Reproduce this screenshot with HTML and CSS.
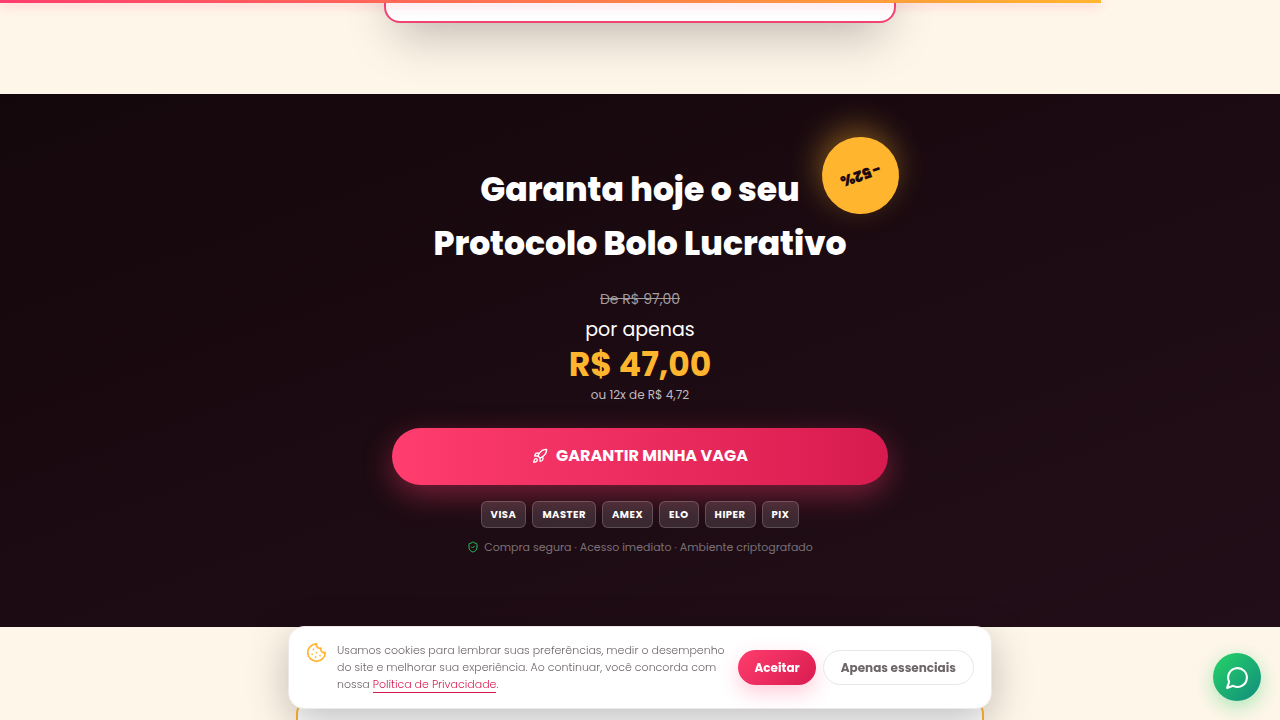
FILE: index.html
```
<!DOCTYPE html>
<html lang="pt-BR">
<head>
    <meta charset="UTF-8">
    <meta name="viewport" content="width=device-width, initial-scale=1.0">
    <title>Protocolo Bolo Lucrativo</title>
    <link rel="stylesheet" href="styles.css">
</head>
<body>
    <div class="progress"><div class="progress-bar" style="width: 86%"></div></div>

    <section class="prev-section">
        <div class="prev-card"></div>
    </section>

    <section class="offer">
        <div class="offer-inner">
            <div class="discount">-52%</div>
            <h2>Garanta hoje o seu<br>Protocolo Bolo Lucrativo</h2>
            <div class="old-price">De R$ 97,00</div>
            <div class="only">por apenas</div>
            <div class="price">R$ 47,00</div>
            <div class="installments">ou 12x de R$ 4,72</div>
            <button class="cta" type="button">
                <svg class="icon" width="16" height="16" viewBox="0 0 24 24">
                    <path d="M4.5 16.5c-1.5 1.26-2 5-2 5s3.74-.5 5-2c.71-.84.7-2.13-.09-2.91a2.18 2.18 0 0 0-2.91-.09z"/>
                    <path d="m12 15-3-3a22 22 0 0 1 2-3.95A12.88 12.88 0 0 1 22 2c0 2.72-.78 7.5-6 11a22.35 22.35 0 0 1-4 2z"/>
                    <path d="M9 12H4s.55-3.03 2-4c1.62-1.08 5 0 5 0"/>
                    <path d="M12 15v5s3.03-.55 4-2c1.08-1.62 0-5 0-5"/>
                </svg>
                GARANTIR MINHA VAGA
            </button>
            <div class="brands">
                <span>VISA</span>
                <span>MASTER</span>
                <span>AMEX</span>
                <span>ELO</span>
                <span>HIPER</span>
                <span>PIX</span>
            </div>
            <div class="secure">
                <svg class="icon" width="12" height="12" viewBox="0 0 24 24">
                    <path d="M20 13c0 5-3.5 7.5-7.66 8.95a1 1 0 0 1-.67-.01C7.5 20.5 4 18 4 13V6a1 1 0 0 1 1-1c2 0 4.5-1.2 6.24-2.72a1.17 1.17 0 0 1 1.52 0C14.51 3.81 17 5 19 5a1 1 0 0 1 1 1z"/>
                    <path d="m9 12 2 2 4-4"/>
                </svg>
                Compra segura · Acesso imediato · Ambiente criptografado
            </div>
        </div>
    </section>

    <section class="next-section">
        <div class="next-card"></div>
    </section>

    <div class="cookies">
        <svg class="icon cookie-icon" width="21" height="21" viewBox="0 0 24 24">
            <path d="M12 2a10 10 0 1 0 10 10 4 4 0 0 1-5-5 4 4 0 0 1-5-5"/>
            <path d="M8.5 8.5v.01"/>
            <path d="M16 15.5v.01"/>
            <path d="M12 12v.01"/>
            <path d="M11 17v.01"/>
            <path d="M7 14v.01"/>
        </svg>
        <p>Usamos cookies para lembrar suas preferências, medir o desempenho do site e melhorar sua experiência. Ao continuar, você concorda com nossa <a href="#">Política de Privacidade</a>.</p>
        <button class="accept" type="button">Aceitar</button>
        <button class="essential" type="button">Apenas essenciais</button>
    </div>

    <button class="chat" type="button" aria-label="Chat">
        <svg class="icon" width="25" height="25" viewBox="0 0 24 24">
            <path d="M7.9 20A9 9 0 1 0 4 16.1L2 22Z"/>
        </svg>
    </button>
</body>
</html>
```
FILE: styles.css
```
* {
    box-sizing: border-box;
    margin: 0;
    padding: 0;
}
body {
    display: flex;
    flex-direction: column;
    min-height: 100vh;
    font-family: Poppins, Inter, "Liberation Sans", sans-serif;
    background: #fff6ea;
    color: #1a0a10;
}
button {
    font-family: inherit;
    border: none;
    cursor: pointer;
}
.icon {
    flex-shrink: 0;
    fill: none;
    stroke: currentColor;
    stroke-width: 2;
    stroke-linecap: round;
    stroke-linejoin: round;
}
.progress {
    position: fixed;
    top: 0;
    left: 0;
    width: 100%;
    z-index: 10;
}
.progress-bar {
    height: 3px;
    background: linear-gradient(90deg, #ff3d6e, #ffb52e);
    box-shadow: 0 2px 12px rgba(255, 61, 110, 0.4);
}
.prev-section {
    padding: 0 16px 71px;
}
.prev-card {
    max-width: 512px;
    height: 223px;
    margin: -200px auto 0;
    background: #fff;
    border: 2px solid #f04473;
    border-radius: 16px;
    box-shadow: 0 24px 48px -12px rgba(0, 0, 0, 0.25);
}
.offer {
    position: relative;
    padding: 69px 16px 70px;
    background: linear-gradient(160deg, #14070b, #1c0b12 50%, #220e18);
    color: #fff;
    text-align: center;
}
.offer-inner {
    position: relative;
    max-width: 496px;
    margin: 0 auto;
}
.discount {
    position: absolute;
    top: -26px;
    right: -11px;
    width: 77px;
    height: 77px;
    border-radius: 50%;
    background: #ffb52e;
    color: #1a0a10;
    font-size: 15px;
    font-weight: 900;
    line-height: 77px;
    transform: rotate(160deg);
    box-shadow: 0 10px 30px rgba(255, 181, 46, 0.4);
}
h2 {
    font-size: 33px;
    font-weight: 800;
    line-height: 54px;
    margin-bottom: 16px;
}
.old-price {
    font-size: 14px;
    line-height: 24px;
    color: #a39da0;
    text-decoration: line-through;
}
.only {
    margin-top: 2px;
    font-size: 19px;
    line-height: 34px;
}
.price {
    font-size: 33px;
    font-weight: 700;
    line-height: 36px;
    color: #ffb52e;
}
.installments {
    font-size: 12px;
    line-height: 24px;
    color: #c0babd;
}
.cta {
    display: flex;
    align-items: center;
    justify-content: center;
    gap: 8px;
    width: 100%;
    height: 57px;
    margin-top: 21px;
    padding-bottom: 2px;
    border-radius: 29px;
    background: linear-gradient(90deg, #ff3d6e, #d81b4f);
    color: #fff;
    font-size: 16px;
    font-weight: 700;
    box-shadow: 0 10px 30px rgba(255, 61, 110, 0.4);
}
.brands {
    display: flex;
    justify-content: center;
    gap: 6px;
    margin: 16px 0 9px;
}
.brands span {
    padding: 0 9px;
    border: 1px solid rgba(255, 255, 255, 0.18);
    border-radius: 6px;
    background: rgba(255, 255, 255, 0.12);
    font-size: 10px;
    font-weight: 700;
    line-height: 25px;
    letter-spacing: 0.5px;
}
.secure {
    display: flex;
    align-items: center;
    justify-content: center;
    gap: 5px;
    font-size: 11px;
    line-height: 20px;
    color: #7b7175;
}
.secure .icon {
    color: #25c063;
}
.next-section {
    display: flex;
    flex: 1;
    justify-content: center;
    padding: 71px 16px 0;
}
.next-card {
    width: 100%;
    max-width: 688px;
    border: 2px solid #ffb52e;
    border-bottom: none;
    border-radius: 16px 16px 0 0;
    background: #fff;
}
.cookies {
    position: fixed;
    left: 50%;
    bottom: 11px;
    transform: translateX(-50%);
    display: flex;
    align-items: center;
    width: 704px;
    max-width: 94%;
    padding: 15px 17px;
    border: 1px solid #eee9e6;
    border-radius: 16px;
    background: #fff;
    box-shadow: 0 12px 40px rgba(0, 0, 0, 0.25);
}
.cookie-icon {
    align-self: flex-start;
    margin-right: 10px;
    color: #ffb52e;
}
.cookies p {
    flex: 1;
    margin-right: 8px;
    font-size: 11px;
    font-weight: 300;
    line-height: 17px;
    color: #6d6669;
}
.cookies a {
    color: #d81b4f;
    text-decoration: none;
    border-bottom: 1px solid #d81b4f;
}
.accept,
.essential {
    height: 35px;
    padding: 0 16px;
    border-radius: 18px;
    font-size: 12px;
    font-weight: 700;
    white-space: nowrap;
}
.accept {
    margin-right: 7px;
    background: linear-gradient(135deg, #ff3d6e, #d81b4f);
    color: #fff;
    box-shadow: 0 8px 20px rgba(255, 61, 110, 0.25);
}
.essential {
    padding: 0 17px;
    border: 1px solid #e8e6e7;
    background: #fff;
    color: #6d6669;
}
.chat {
    position: fixed;
    right: 19px;
    bottom: 19px;
    display: flex;
    align-items: center;
    justify-content: center;
    width: 48px;
    height: 48px;
    border-radius: 50%;
    background: linear-gradient(135deg, #25d366, #128c7e);
    color: #fff;
    box-shadow: 0 6px 20px rgba(37, 211, 102, 0.4);
}
```
